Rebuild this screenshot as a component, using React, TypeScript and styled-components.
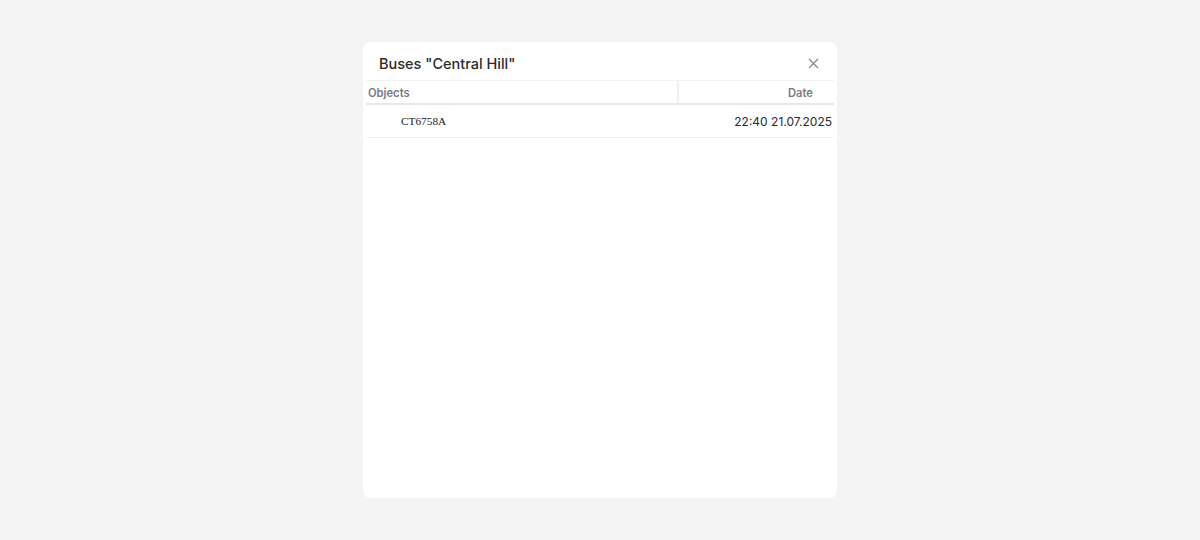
import React from "react";
import styled, { createGlobalStyle } from "styled-components";

const Global = createGlobalStyle`
  html, body { margin: 0; padding: 0; background: #f4f4f4; }
  body { font-family: Inter, "Liberation Sans", Arial, sans-serif; }
`;

const Page = styled.div`
  width: 1200px;
  height: 540px;
  display: flex;
  justify-content: center;
  padding-top: 42px;
  box-sizing: border-box;
`;

const Card = styled.div`
  width: 474px;
  height: 456px;
  background: #fff;
  border-radius: 7px;
  display: flex;
  flex-direction: column;
  box-sizing: border-box;
`;

const Header = styled.div`
  height: 38px;
  display: flex;
  align-items: center;
  justify-content: space-between;
  padding: 0 16px 0 16px;
  box-sizing: border-box;
`;

const Title = styled.h2`
  margin: 0;
  font-size: 14.5px;
  font-weight: 500;
  color: #2b2b2b;
  padding-top: 4px;
`;

const Close = styled.button`
  border: 0;
  background: none;
  padding: 0;
  width: 16px;
  height: 16px;
  display: flex;
  align-items: center;
  justify-content: center;
  cursor: pointer;
  margin-top: 4px;
`;

const Table = styled.div`
  margin: 0 3px;
  display: flex;
  flex-direction: column;
`;

const HeadRow = styled.div`
  display: grid;
  grid-template-columns: 311px 1fr;
  height: 25px;
  border-top: 1px solid #f2f2f2;
  border-bottom: 2px solid #e8e8e8;
  box-sizing: border-box;
`;

const HeadCell = styled.div<{ $right?: boolean }>`
  display: flex;
  align-items: center;
  justify-content: ${(p) => (p.$right ? "flex-end" : "flex-start")};
  padding: ${(p) => (p.$right ? "1px 21px 0 0" : "1px 0 0 2px")};
  font-size: 11.2px;
  font-weight: 600;
  color: #7a7a80;
  border-left: ${(p) => (p.$right ? "2px solid #f0f0f0" : "none")};
`;

const Row = styled.div`
  display: grid;
  grid-template-columns: 311px 1fr;
  height: 33px;
  border-bottom: 1px solid #f0f0f0;
  box-sizing: border-box;
`;

const NameCell = styled.div`
  display: flex;
  align-items: center;
  padding-left: 35px;
  font-family: "Liberation Serif", "Times New Roman", serif;
  font-size: 11.3px;
  color: #222;
`;

const DateCell = styled.div`
  display: flex;
  align-items: center;
  justify-content: flex-end;
  padding-right: 2px;
  font-size: 12px;
  font-weight: 400;
  color: #2b2b2b;
`;

export default function App() {
  return (
    <>
      <Global />
      <Page>
        <Card>
          <Header>
            <Title>Buses "Central Hill"</Title>
            <Close aria-label="Close">
              <svg width="11" height="11" viewBox="0 0 11 11">
                <path d="M1 1L10 10M10 1L1 10" stroke="#8a8a8a" strokeWidth="1.3" />
              </svg>
            </Close>
          </Header>
          <Table>
            <HeadRow>
              <HeadCell>Objects</HeadCell>
              <HeadCell $right>Date</HeadCell>
            </HeadRow>
            <Row>
              <NameCell>CT6758A</NameCell>
              <DateCell>22:40 21.07.2025</DateCell>
            </Row>
          </Table>
        </Card>
      </Page>
    </>
  );
}
